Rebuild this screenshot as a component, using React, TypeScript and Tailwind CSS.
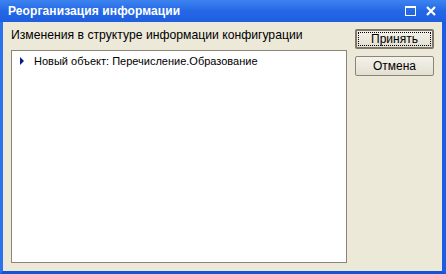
const font = { fontFamily: '"Liberation Sans", Arial, sans-serif' };

const App = () => {
  return (
    <div
      className="w-[446px] h-[274px] flex flex-col bg-[#0a4fd8] text-black"
      style={font}
    >
      {/* title bar */}
      <div className="h-[22px] flex items-center bg-gradient-to-b from-[#3d84f0] via-[#2467e6] to-[#1f5fe0] pl-[8px] pr-[10px]">
        <span className="text-white font-bold text-[12px] leading-none tracking-[0.1px]">
          Реорганизация информации
        </span>
        <div className="ml-auto flex items-center gap-[10px]">
          <div className="w-[11px] h-[10px] border-[1.5px] border-t-[2px] border-white" />
          <svg width="10" height="10" viewBox="0 0 10 10">
            <path d="M1 1 L9 9 M9 1 L1 9" stroke="#fff" strokeWidth="2.2" />
          </svg>
        </div>
      </div>

      {/* body */}
      <div className="flex-1 flex border-l-[3px] border-l-[#2a72f0] border-r-[4px] border-r-[#1a5ee6] border-b-[3px] border-b-[#1552d8] bg-[#ece9d8]">
        <div className="flex pl-[8px] pt-[6px]">
          <div className="w-[336px] flex flex-col">
            <div className="h-[22px] text-[12.2px] leading-[15px]">
              Изменения в структуре информации конфигурации
            </div>
            <div className="h-[213px] bg-white border border-[#8a8578]">
              <div className="flex items-center h-[18px] mt-[1px] pl-[8px]">
                <svg width="5" height="8" viewBox="0 0 5 8" className="mr-[9px]">
                  <path d="M0 0 L4 4 L0 8 Z" fill="#0a1a8c" />
                </svg>
                <span className="text-[11px] leading-[14px]">
                  Новый объект: Перечисление.Образование
                </span>
              </div>
            </div>
          </div>
          <div className="ml-[8px] flex flex-col gap-[7px] pt-[1px]">
            <button className="w-[79px] h-[20px] border-[2px] border-[#7d786b] rounded-[2px] bg-gradient-to-b from-[#f4f2ea] to-[#e3dfd2] p-[1px]">
              <div className="w-full h-full border border-dotted border-black flex items-center justify-center text-[12px] leading-none">
                Принять
              </div>
            </button>
            <button className="w-[79px] h-[20px] border border-[#8a8578] rounded-[2px] bg-gradient-to-b from-[#f4f2ea] to-[#e3dfd2] flex items-center justify-center text-[12px] leading-none">
              Отмена
            </button>
          </div>
        </div>
      </div>
    </div>
  );
};

export default App;
